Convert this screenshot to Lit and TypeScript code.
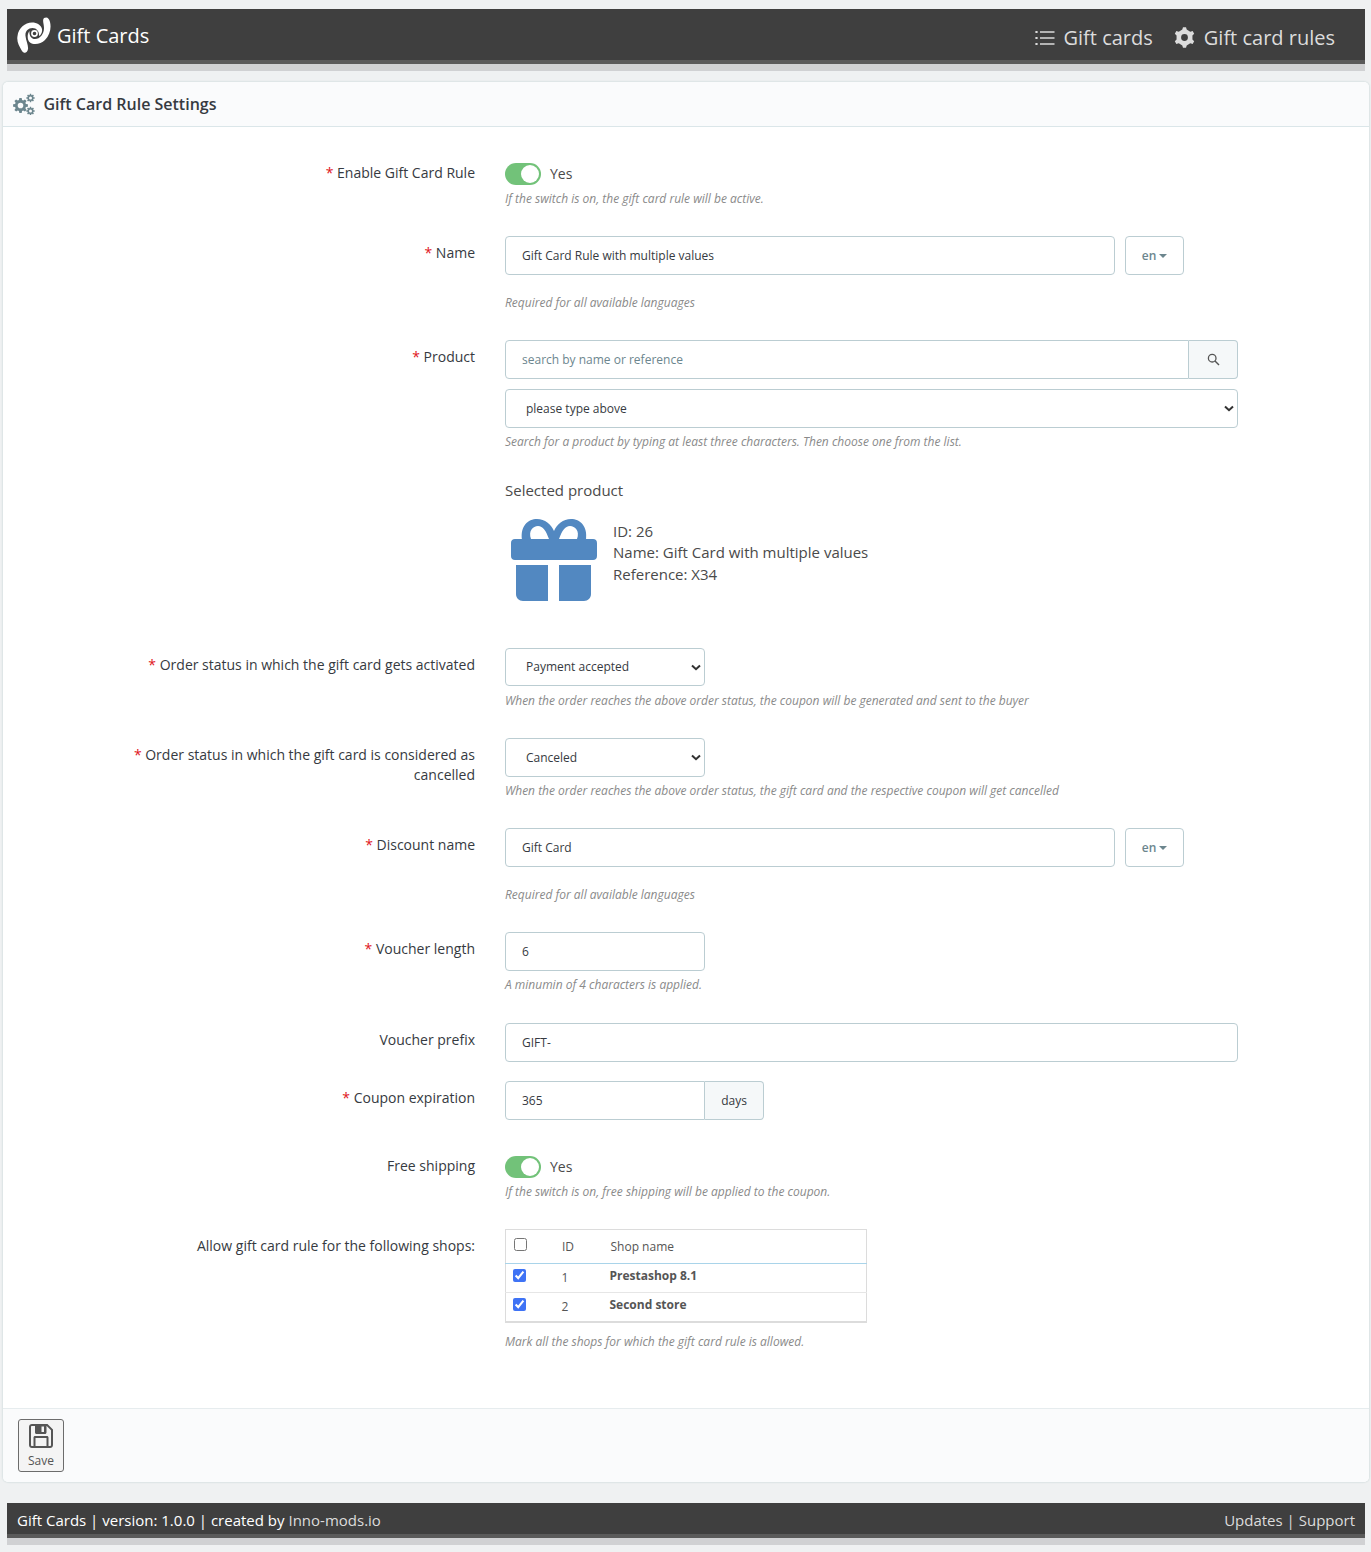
import { LitElement, html, css, svg } from "lit";
import { customElement } from "lit/decorators.js";

function gear(cx: number, cy: number, R: number, r: number, hole: number, teeth = 8, w = 0.2, base = 0.36) {
  const pts: string[] = [];
  const step = (Math.PI * 2) / teeth;
  for (let i = 0; i < teeth; i++) {
    const a = i * step + Math.PI / 2;
    const list: [number, number][] = [
      [a - step * base, r],
      [a - step * w, R],
      [a + step * w, R],
      [a + step * base, r],
    ];
    for (const [t, d] of list) {
      pts.push(`${(cx + Math.cos(t) * d).toFixed(2)} ${(cy + Math.sin(t) * d).toFixed(2)}`);
    }
  }
  const ring = `M${cx - hole} ${cy}a${hole} ${hole} 0 1 0 ${hole * 2} 0a${hole} ${hole} 0 1 0 ${-hole * 2} 0Z`;
  return `M${pts.join("L")}Z${ring}`;
}

const required = html`<span class="req">*</span> `;

const sw = html`<div class="switch-line"><span class="switch"><span class="knob"></span></span><span class="yes">Yes</span></div>`;

const lang = html`<button class="lang">en<span class="caret"></span></button>`;

@customElement("app-root")
export class AppRoot extends LitElement {
  static styles = css`
    :host {
      display: block;
      height: 1552px;
      background: #eff1f2;
      font-family: "Open Sans", sans-serif;
      color: #363a41;
      overflow: hidden;
      box-sizing: border-box;
      padding-top: 9px;
    }
    * { box-sizing: border-box; }
    .bar {
      margin: 0 6px 0 7px;
      background: #3f3f3f;
      border-bottom: 4px solid #5a5a5a;
      box-shadow: 0 7px 0 #d0d1d3;
      display: flex;
      justify-content: space-between;
      align-items: center;
      color: #fff;
    }
    .top { height: 55px; padding: 0 30px 0 10px; }
    .brand { display: flex; align-items: center; gap: 5px; font-size: 20px; line-height: 26px; }
    .brand span { position: relative; top: 1px; }
    .nav { display: flex; gap: 21px; font-size: 20px; color: #dcdcdc; padding-top: 6px; }
    .nav-item { display: flex; align-items: center; gap: 9px; }
    .panel {
      margin: 18px 2px 21px 3px;
      background: #fff;
      border-radius: 5px;
      box-shadow: 0 0 2px rgba(110, 150, 150, 0.45);
      height: 1400px;
      display: flex;
      flex-direction: column;
      color: #363a41;
    }
    .panel-head {
      height: 45px;
      background: #fafbfc;
      border-bottom: 1px solid #dbe6e9;
      border-radius: 5px 5px 0 0;
      display: flex;
      align-items: center;
      gap: 7.5px;
      padding: 0 0 0 10px;
      font-size: 16px;
      font-weight: 600;
      color: #363a41;
    }
    .body { flex: 1; padding-top: 36px; }
    .row { display: grid; grid-template-columns: 472px 733px; column-gap: 30px; margin-bottom: 29px; }
    .row.tight { margin-bottom: 19px; }
    .row.wide { margin-bottom: 30px; }
    .row.switchy { margin-bottom: 36px; }
    .row.product { margin-bottom: 43px; }
    .label { text-align: right; font-size: 14px; line-height: 20px; padding: 7px 0 0 112px; color: #363a41; }
    .label.flat { padding-top: 0; }
    .req { color: #e0141c; }
    .input {
      display: block;
      height: 39px;
      width: 100%;
      border: 1px solid #bbcdd2;
      border-radius: 4px;
      background: #fff;
      padding: 0 16px;
      font: 12px/37px "Open Sans", sans-serif;
      color: #363a41;
      outline: none;
    }
    .input::placeholder { color: #6c868e; opacity: 1; }
    select.input {
      appearance: none;
      padding-left: 20px;
      background: #fff url("data:image/svg+xml,%3Csvg xmlns='http://www.w3.org/2000/svg' width='10' height='7' viewBox='0 0 10 7'%3E%3Cpath d='M1 1.4 5 5.2 9 1.4' fill='none' stroke='%23333' stroke-width='2'/%3E%3C/svg%3E") no-repeat right 3px center;
    }
    select.input.s38 { height: 38px; line-height: 36px; }
    .short { width: 200px; }
    .help { font-size: 12px; line-height: 18px; height: 17px; font-style: italic; color: #8a8a8a; margin-top: 5px; white-space: nowrap; }
    .s38 + .help { margin-top: 6px; }
    .help.far { margin-top: 19px; }
    .help.table-help { margin-top: 10px; }
    .switch-line { display: flex; align-items: center; height: 22px; gap: 9px; }
    .switch { width: 36px; height: 22px; border-radius: 11px; background: #72c279; position: relative; display: block; }
    .knob { position: absolute; top: 2px; right: 2px; width: 18px; height: 18px; border-radius: 50%; background: #fff; }
    .yes { font-size: 14px; color: #4a4a4a; margin-top: -2px; }
    .with-lang { display: flex; gap: 10px; }
    .with-lang .input { width: 610px; }
    .lang {
      width: 59px; height: 39px; border: 1px solid #bbcdd2; border-radius: 4px; background: #fff;
      font: 600 12px "Open Sans", sans-serif; color: #6c868e; padding: 0; display: flex; align-items: center; justify-content: center; gap: 3px;
    }
    .caret { width: 0; height: 0; border-left: 4px solid transparent; border-right: 4px solid transparent; border-top: 4px solid #6c868e; }
    .group { display: flex; }
    .group .input { border-radius: 4px 0 0 4px; flex: none; }
    .addon {
      height: 39px; border: 1px solid #bbcdd2; border-left: 0; border-radius: 0 4px 4px 0; background: #f5f8f9;
      display: flex; align-items: center; justify-content: center; font-size: 12px; color: #363a41; flex: none;
    }
    .search-group .input { width: 684px; }
    .search-group .addon { width: 49px; }
    .days { width: 59px; }
    .stack { margin-top: 10px; }
    .selected-title { font-size: 15px; line-height: 20px; margin-top: 30px; color: #4a4a4a; }
    .selected { display: flex; align-items: center; height: 90px; margin-top: 15px; gap: 15px; }
    .selected .info { font-size: 15px; line-height: 21.5px; color: #4a4a4a; margin-top: -14px; }
    .gift { margin-left: 5px; display: block; }
    table { width: 362px; border-collapse: collapse; border: 1px solid #dcdcdc; border-bottom-width: 2px; font-size: 12px; color: #6c6c6c; }
    th { font-weight: 400; text-align: left; height: 34px; border-bottom: 1px solid #a9d4ea; padding: 0; color: #555; }
    td { height: 29px; padding: 0; border-bottom: 1px solid #e6e6e6; color: #555; }
    tr:last-child td { border-bottom: 0; }
    .c1 { width: 56px; padding-left: 7px; }
    th.c1 { padding-left: 8px; }
    .c2 { width: 48px; }
    th.c2 { padding-bottom: 1px; padding-left: 0.5px; }
    td.c2 { padding-bottom: 1px; }
    th.c3 { padding-left: 1px; padding-bottom: 1px; }
    td.c3 { font-weight: 700; padding-bottom: 5px; }
    input[type="checkbox"] { margin: 0; width: 13px; height: 13px; display: block; accent-color: #3f73f5; }
    th input[type="checkbox"] { margin-top: -5px; }
    td input[type="checkbox"] { margin-top: -5px; }
    .panel-foot { height: 74px; background: #fafbfc; border-top: 1px solid #e6ecee; border-radius: 0 0 5px 5px; padding: 10px 0 0 15px; }
    .save {
      width: 46px; height: 53px; border: 1px solid #6c6c6c; border-radius: 3px; background: #f4f4f4;
      display: flex; flex-direction: column; align-items: center; padding: 4px 0 0; font: 12px "Open Sans", sans-serif; color: #555;
    }
    .save svg { display: block; margin-bottom: 4px; }
    .foot { height: 35px; padding: 2px 10px 0 10px; font-size: 15px; font-weight: 500; }
    .foot .dim { color: #dcdcdc; font-weight: 400; }
  `;

  render() {
    return html`
      <header class="bar top">
        <div class="brand">
          <svg width="35" height="36" viewBox="0 0 35 36" fill="#fff">
            <path d="M5 34C2 29-.5 25 .5 19 1.500 11 8 5.500 15 5.500 20 5.500 24 8 25 12 25.500 15 24 18 22 19 22.500 15 20 11 15.500 11 11 11 8 14.500 8.500 19 9 24 11.500 28 11 32 10.500 36 7 37 5 34Z"/>
            <path d="M27 1C30-.5 32 1 33 5 34.500 11 33 18 28 23 24 27 17 28.500 13 25.500 10 23 10 17 12.500 14 12 18 14 22 18 22 23 22 27 17 27 11 27 7 25 3 27 1Z"/>
            <circle cx="17.500" cy="16.500" r="2.600" fill="none" stroke="#fff" stroke-width="1.600"/>
          </svg>
          <span>Gift Cards</span>
        </div>
        <nav class="nav">
          <div class="nav-item">
            <svg width="20" height="16" viewBox="0 0 20 16" fill="none" stroke="#dcdcdc">
              <path stroke-width="1.6" d="M5 2h14.500M5 8h14.500M5 14h14.500"/>
              <path stroke-width="2.200" stroke-dasharray="2 4" d="M1.500 1v14"/>
            </svg>
            Gift cards
          </div>
          <div class="nav-item">
            <svg width="21" height="21" viewBox="0 0 21 21">
              <path fill="#dcdcdc" fill-rule="evenodd" d=${gear(10.5, 10.5, 10.4, 8.2, 3.4, 6, 0.14, 0.26)}/>
            </svg>
            Gift card rules
          </div>
        </nav>
      </header>

      <section class="panel">
        <div class="panel-head">
          <svg width="23" height="22" viewBox="0 0 23 22" fill="#6c868e" fill-rule="evenodd">
            ${svg`<path d=${gear(7.5, 12.5, 7.5, 5.6, 2.8, 8)}/>
            <path d=${gear(17.5, 5, 4.200, 3.100, 1.500, 8)}/>
            <path d=${gear(17.5, 18, 4.200, 3.100, 1.500, 8)}/>`}
          </svg>
          Gift Card Rule Settings
        </div>
        <div class="body">
          <div class="row">
            <div class="label flat">${required}Enable Gift Card Rule</div>
            <div>${sw}<div class="help">If the switch is on, the gift card rule will be active.</div></div>
          </div>
          <div class="row">
            <div class="label">${required}Name</div>
            <div>
              <div class="with-lang"><input class="input" value="Gift Card Rule with multiple values" />${lang}</div>
              <div class="help far">Required for all available languages</div>
            </div>
          </div>
          <div class="row product">
            <div class="label">${required}Product</div>
            <div>
              <div class="group search-group">
                <input class="input" placeholder="search by name or reference" />
                <div class="addon">
                  <svg width="13" height="13" viewBox="0 0 13 13" fill="none" stroke="#555">
                    <circle cx="5.200" cy="5.200" r="3.800" stroke-width="1.300"/>
                    <path d="M8 8l4 4" stroke-width="1.500"/>
                  </svg>
                </div>
              </div>
              <select class="input stack"><option>please type above</option></select>
              <div class="help">Search for a product by typing at least three characters. Then choose one from the list.</div>
              <div class="selected-title">Selected product</div>
              <div class="selected">
                <svg class="gift" width="88" height="84" viewBox="0 0 88 84" fill="#5288c1">
                  <path fill-rule="evenodd" d="M12 22C10 8 18 1 27 1 35 1 41 6 44 13 47 6 53 1 61 1 70 1 78 8 76 22ZM21 21H39C36 13 33 8 28 8 23 8 18 13 21 21ZM49 21H67C70 13 65 8 60 8 55 8 52 13 49 21Z"/>
                  <path d="M5 21H83C85.500 21 87 22.500 87 25V38C87 40.500 85.500 42 83 42H5C2.500 42 1 40.500 1 38V25C1 22.500 2.500 21 5 21Z"/>
                  <path d="M6 47H38V83H13C9 83 6 80 6 76ZM49 47H81V76C81 80 78 83 74 83H49Z"/>
                </svg>
                <div class="info">ID: 26<br />Name: Gift Card with multiple values<br />Reference: X34</div>
              </div>
            </div>
          </div>
          <div class="row">
            <div class="label">${required}Order status in which the gift card gets activated</div>
            <div>
              <select class="input short s38"><option>Payment accepted</option></select>
              <div class="help">When the order reaches the above order status, the coupon will be generated and sent to the buyer</div>
            </div>
          </div>
          <div class="row">
            <div class="label">${required}Order status in which the gift card is considered as cancelled</div>
            <div>
              <select class="input short"><option>Canceled</option></select>
              <div class="help">When the order reaches the above order status, the gift card and the respective coupon will get cancelled</div>
            </div>
          </div>
          <div class="row">
            <div class="label">${required}Discount name</div>
            <div>
              <div class="with-lang"><input class="input" value="Gift Card" />${lang}</div>
              <div class="help far">Required for all available languages</div>
            </div>
          </div>
          <div class="row wide">
            <div class="label">${required}Voucher length</div>
            <div>
              <input class="input short" value="6" />
              <div class="help">A minumin of 4 characters is applied.</div>
            </div>
          </div>
          <div class="row tight">
            <div class="label">Voucher prefix</div>
            <div><input class="input" value="GIFT-" /></div>
          </div>
          <div class="row switchy">
            <div class="label">${required}Coupon expiration</div>
            <div class="group">
              <input class="input short" value="365" />
              <div class="addon days">days</div>
            </div>
          </div>
          <div class="row">
            <div class="label flat">Free shipping</div>
            <div>${sw}<div class="help">If the switch is on, free shipping will be applied to the coupon.</div></div>
          </div>
          <div class="row">
            <div class="label">Allow gift card rule for the following shops:</div>
            <div>
              <table>
                <thead>
                  <tr>
                    <th class="c1"><input type="checkbox" /></th>
                    <th class="c2">ID</th>
                    <th class="c3">Shop name</th>
                  </tr>
                </thead>
                <tbody>
                  <tr>
                    <td class="c1"><input type="checkbox" checked /></td>
                    <td class="c2">1</td>
                    <td class="c3">Prestashop 8.1</td>
                  </tr>
                  <tr>
                    <td class="c1"><input type="checkbox" checked /></td>
                    <td class="c2">2</td>
                    <td class="c3">Second store</td>
                  </tr>
                </tbody>
              </table>
              <div class="help table-help">Mark all the shops for which the gift card rule is allowed.</div>
            </div>
          </div>
        </div>
        <div class="panel-foot">
          <button class="save">
            <svg width="24" height="24" viewBox="0 0 24 24" fill="#555" fill-rule="evenodd">
              <path d="M3 0h15.500L24 5.500V21c0 1.700-1.300 3-3 3H3c-1.700 0-3-1.300-3-3V3c0-1.700 1.300-3 3-3ZM6 2H3c-.6 0-1 .4-1 1v18c0 .6.4 1 1 1h1.500V13.500C4.500 12.700 5.200 12 6 12h12c.8 0 1.500.7 1.500 1.500V22H21c.6 0 1-.4 1-1V6.300L17.700 2H17.500v6.500c0 .8-.7 1.500-1.500 1.500H7.500C6.700 10 6 9.300 6 8.500ZM6.500 14v8h11v-8ZM12.500 2.500h2.500V8h-2.500Z"/>
            </svg>
            Save
          </button>
        </div>
      </section>

      <footer class="bar foot">
        <div>Gift Cards | version: 1.0.0 | created by <span class="dim">Inno-mods.io</span></div>
        <div class="dim">Updates | Support</div>
      </footer>
    `;
  }
}
